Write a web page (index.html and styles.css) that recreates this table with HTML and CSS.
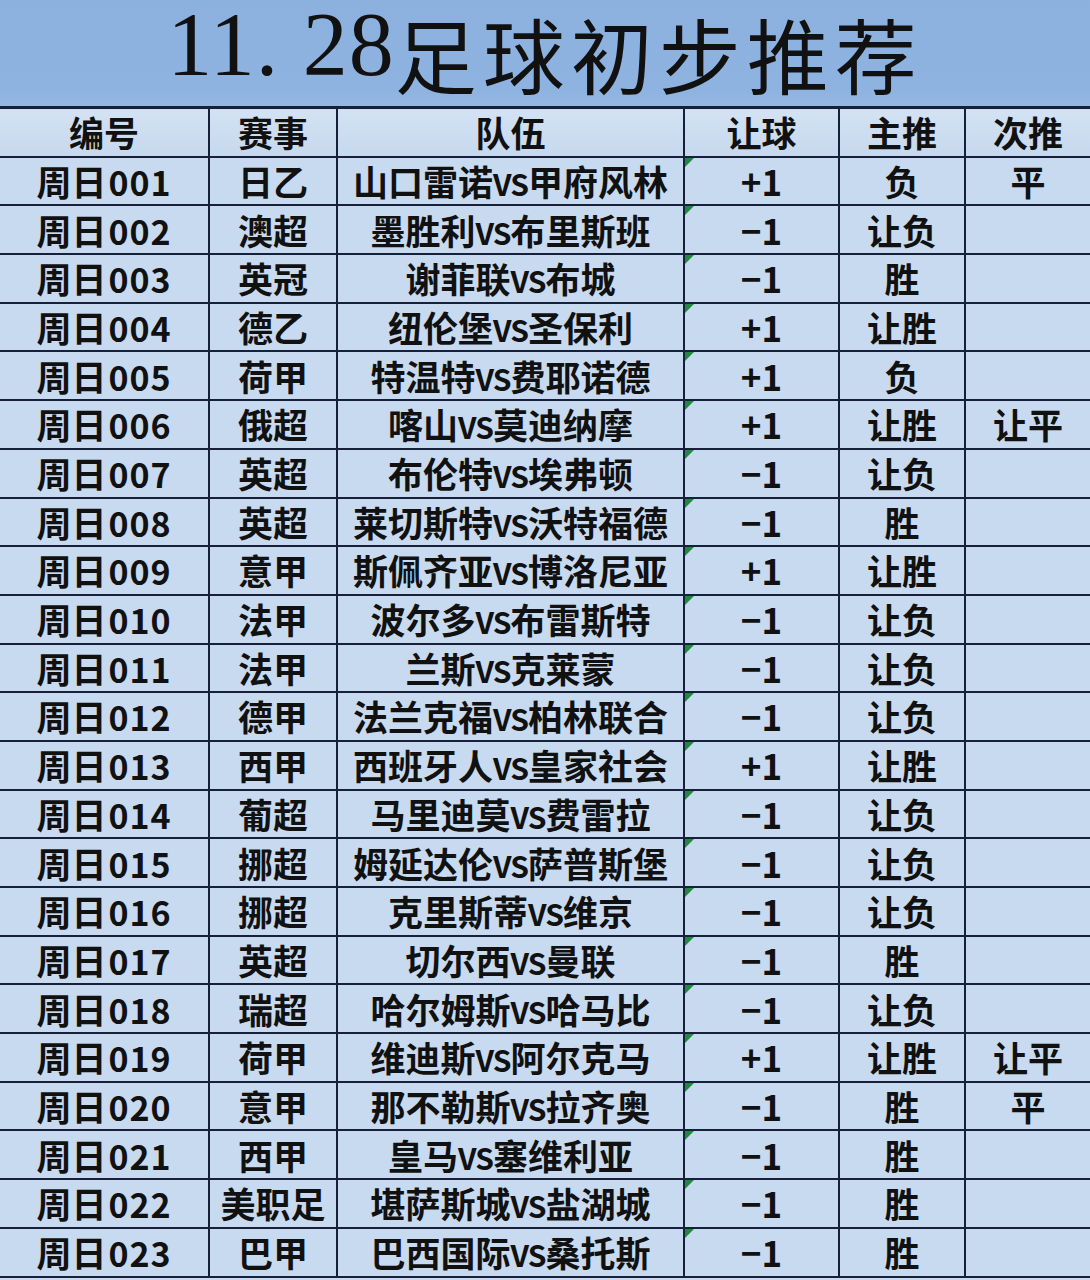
FILE: index.html
```html
<!DOCTYPE html>
<html lang="zh-CN">
<head>
<meta charset="utf-8">
<link rel="stylesheet" href="styles.css">
</head>
<body>
<div class="sheet">
  <header class="title"><span class="num">11. 28</span><span class="cn">足球初步推荐</span></header>
  <table class="grid">
    <colgroup>
      <col class="c-id"><col class="c-league"><col class="c-team"><col class="c-hcp"><col class="c-main"><col class="c-sub">
    </colgroup>
    <thead>
      <tr><th>编号</th><th>赛事</th><th>队伍</th><th>让球</th><th>主推</th><th>次推</th></tr>
    </thead>
    <tbody>
      <tr><td>周日<span class="d">001</span></td><td>日乙</td><td class="team">山口雷诺<span class="vs">VS</span>甲府风林</td><td class="hcp">+1</td><td>负</td><td>平</td></tr>
      <tr><td>周日<span class="d">002</span></td><td>澳超</td><td class="team">墨胜利<span class="vs">VS</span>布里斯班</td><td class="hcp">−1</td><td>让负</td><td></td></tr>
      <tr><td>周日<span class="d">003</span></td><td>英冠</td><td class="team">谢菲联<span class="vs">VS</span>布城</td><td class="hcp">−1</td><td>胜</td><td></td></tr>
      <tr><td>周日<span class="d">004</span></td><td>德乙</td><td class="team">纽伦堡<span class="vs">VS</span>圣保利</td><td class="hcp">+1</td><td>让胜</td><td></td></tr>
      <tr><td>周日<span class="d">005</span></td><td>荷甲</td><td class="team">特温特<span class="vs">VS</span>费耶诺德</td><td class="hcp">+1</td><td>负</td><td></td></tr>
      <tr><td>周日<span class="d">006</span></td><td>俄超</td><td class="team">喀山<span class="vs">VS</span>莫迪纳摩</td><td class="hcp">+1</td><td>让胜</td><td>让平</td></tr>
      <tr><td>周日<span class="d">007</span></td><td>英超</td><td class="team">布伦特<span class="vs">VS</span>埃弗顿</td><td class="hcp">−1</td><td>让负</td><td></td></tr>
      <tr><td>周日<span class="d">008</span></td><td>英超</td><td class="team">莱切斯特<span class="vs">VS</span>沃特福德</td><td class="hcp">−1</td><td>胜</td><td></td></tr>
      <tr><td>周日<span class="d">009</span></td><td>意甲</td><td class="team">斯佩齐亚<span class="vs">VS</span>博洛尼亚</td><td class="hcp">+1</td><td>让胜</td><td></td></tr>
      <tr><td>周日<span class="d">010</span></td><td>法甲</td><td class="team">波尔多<span class="vs">VS</span>布雷斯特</td><td class="hcp">−1</td><td>让负</td><td></td></tr>
      <tr><td>周日<span class="d">011</span></td><td>法甲</td><td class="team">兰斯<span class="vs">VS</span>克莱蒙</td><td class="hcp">−1</td><td>让负</td><td></td></tr>
      <tr><td>周日<span class="d">012</span></td><td>德甲</td><td class="team">法兰克福<span class="vs">VS</span>柏林联合</td><td class="hcp">−1</td><td>让负</td><td></td></tr>
      <tr><td>周日<span class="d">013</span></td><td>西甲</td><td class="team">西班牙人<span class="vs">VS</span>皇家社会</td><td class="hcp">+1</td><td>让胜</td><td></td></tr>
      <tr><td>周日<span class="d">014</span></td><td>葡超</td><td class="team">马里迪莫<span class="vs">VS</span>费雷拉</td><td class="hcp">−1</td><td>让负</td><td></td></tr>
      <tr><td>周日<span class="d">015</span></td><td>挪超</td><td class="team">姆延达伦<span class="vs">VS</span>萨普斯堡</td><td class="hcp">−1</td><td>让负</td><td></td></tr>
      <tr><td>周日<span class="d">016</span></td><td>挪超</td><td class="team">克里斯蒂<span class="vs">VS</span>维京</td><td class="hcp">−1</td><td>让负</td><td></td></tr>
      <tr><td>周日<span class="d">017</span></td><td>英超</td><td class="team">切尔西<span class="vs">VS</span>曼联</td><td class="hcp">−1</td><td>胜</td><td></td></tr>
      <tr><td>周日<span class="d">018</span></td><td>瑞超</td><td class="team">哈尔姆斯<span class="vs">VS</span>哈马比</td><td class="hcp">−1</td><td>让负</td><td></td></tr>
      <tr><td>周日<span class="d">019</span></td><td>荷甲</td><td class="team">维迪斯<span class="vs">VS</span>阿尔克马</td><td class="hcp">+1</td><td>让胜</td><td>让平</td></tr>
      <tr><td>周日<span class="d">020</span></td><td>意甲</td><td class="team">那不勒斯<span class="vs">VS</span>拉齐奥</td><td class="hcp">−1</td><td>胜</td><td>平</td></tr>
      <tr><td>周日<span class="d">021</span></td><td>西甲</td><td class="team">皇马<span class="vs">VS</span>塞维利亚</td><td class="hcp">−1</td><td>胜</td><td></td></tr>
      <tr><td>周日<span class="d">022</span></td><td>美职足</td><td class="team">堪萨斯城<span class="vs">VS</span>盐湖城</td><td class="hcp">−1</td><td>胜</td><td></td></tr>
      <tr><td>周日<span class="d">023</span></td><td>巴甲</td><td class="team">巴西国际<span class="vs">VS</span>桑托斯</td><td class="hcp">−1</td><td>胜</td><td></td></tr>
    </tbody>
  </table>
</div>
</body>
</html>
```

FILE: styles.css
```css
html, body {
  margin: 0;
  padding: 0;
  background: #c8daef;
}

.sheet {
  width: 1090px;
  height: 1280px;
  overflow: hidden;
  background: #c8daef;
}

.title {
  height: 106px;
  box-sizing: border-box;
  background: linear-gradient(180deg, #8cb1df 0%, #8eb3e0 85%, #95b8e2 100%);
  display: flex;
  justify-content: center;
  align-items: flex-end;
  padding-bottom: 12px;
  color: #111;
  line-height: 1;
}

.title .num {
  font-family: "Liberation Serif", serif;
  font-size: 90px;
  letter-spacing: 1px;
  white-space: pre;
  margin-bottom: 4px;
}

.title .cn {
  font-family: "Noto Sans CJK SC", sans-serif;
  font-weight: 400;
  font-size: 82px;
  letter-spacing: 6px;
}

.grid {
  width: 1090px;
  table-layout: fixed;
  border-collapse: collapse;
  font-family: "Noto Sans CJK SC", sans-serif;
  font-weight: 700;
  font-size: 35px;
  color: #111;
  border-top: 3px solid #16203a;
  border-bottom: 2px solid #16203a;
}

.c-id { width: 209px; }
.c-league { width: 128px; }
.c-team { width: 347px; }
.c-hcp { width: 155px; }
.c-main { width: 126px; }
.c-sub { width: 125px; }

.grid th, .grid td {
  height: 46.7px;
  padding: 0;
  border: 2px solid #16203a;
  text-align: center;
  vertical-align: middle;
  white-space: nowrap;
  line-height: 1.15;
  background: #c8daef;
}

.grid th {
  font-weight: 700;
  background: linear-gradient(180deg, #d3e2f3 0%, #c6d8ee 100%);
}

.grid tr > :first-child { border-left: none; }
.grid tr > :last-child { border-right: none; }

.vs {
  font-size: 30px;
  letter-spacing: -1px;
}

.d {
  font-size: 34px;
  letter-spacing: 1px;
  margin-left: 2px;
}

.hcp {
  position: relative;
}

.hcp::before {
  content: "";
  position: absolute;
  left: 0;
  top: 0;
  width: 0;
  height: 0;
  border-top: 9px solid #1f8a3c;
  border-right: 9px solid transparent;
}
```
